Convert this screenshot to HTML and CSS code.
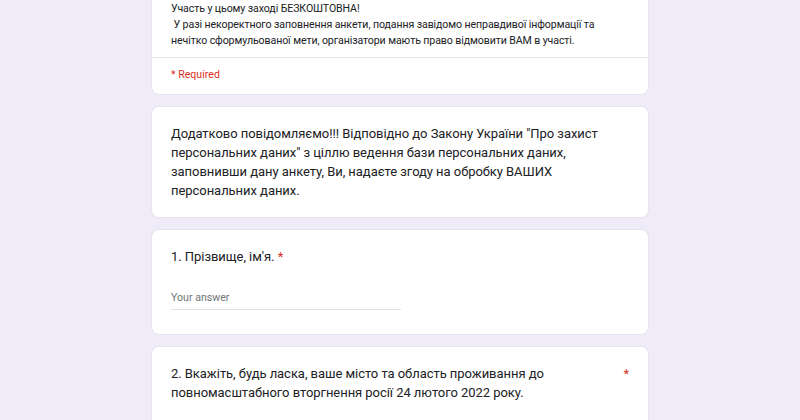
FILE: index.html
```html
<!DOCTYPE html>
<html lang="uk">
<head>
<meta charset="utf-8">
<link rel="stylesheet" href="styles.css">
</head>
<body>
<main class="form">
  <section class="card card-head">
    <div class="head-desc">
      <div>Участь у цьому заході БЕЗКОШТОВНА!</div>
      <div>&nbsp;У разі некоректного заповнення анкети, подання завідомо неправдивої інформації та нечітко сформульованої мети, організатори мають право відмовити ВАМ в участі.</div>
    </div>
    <div class="head-req">* Required</div>
  </section>
  <section class="card card-text">
    <p class="big">Додатково повідомляємо!!! Відповідно до Закону України "Про захист персональних даних" з ціллю ведення бази персональних даних, заповнивши дану анкету, Ви, надаєте згоду на обробку ВАШИХ персональних даних.</p>
  </section>
  <section class="card card-q">
    <div class="q-title big">1. Прізвище, ім'я. <span class="ast">*</span></div>
    <div class="answer">Your answer</div>
  </section>
  <section class="card card-q">
    <div class="q-row">
      <div class="q-title big">2. Вкажіть, будь ласка, ваше місто та область проживання до повномасштабного вторгнення росії 24 лютого 2022 року.</div>
      <span class="ast">*</span>
    </div>
  </section>
</main>
</body>
</html>
```
FILE: styles.css
```css
html, body {
  margin: 0;
  padding: 0;
  background: #f0ebf8;
  font-family: Roboto, "Noto Sans", sans-serif;
  color: #202124;
}
.form {
  width: 498px;
  margin: 0 auto;
  display: flex;
  flex-direction: column;
  gap: 11px;
}
.card {
  background: #fff;
  border: 1px solid #e6e3ec;
  border-radius: 8px;
  box-sizing: border-box;
}
.card-head {
  margin-top: -20px;
}
.head-desc {
  padding: 20px 19px 8px 19px;
  font-size: 10.6px;
  line-height: 16px;
  letter-spacing: -0.1px;
}
.head-req {
  border-top: 1px solid #e3e3e3;
  padding: 10px 19px 12px;
  font-size: 10.6px;
  line-height: 14px;
  color: #d93025;
}
.big {
  font-size: 13px;
  line-height: 19px;
  letter-spacing: -0.05px;
}
.card-text {
  padding: 17px 19px 17px;
}
.card-text p {
  margin: 0;
}
.card-q {
  padding: 17px 19px 24px;
}
.ast {
  color: #d93025;
}
.answer {
  margin-top: 25px;
  width: 230px;
  font-size: 10.6px;
  line-height: 14px;
  color: #70757a;
  padding-bottom: 4px;
  border-bottom: 1px solid #e0e0e0;
}
.q-row {
  display: flex;
  justify-content: space-between;
  gap: 70px;
}
.q-row .ast {
  font-size: 13px;
  line-height: 19px;
}
```
